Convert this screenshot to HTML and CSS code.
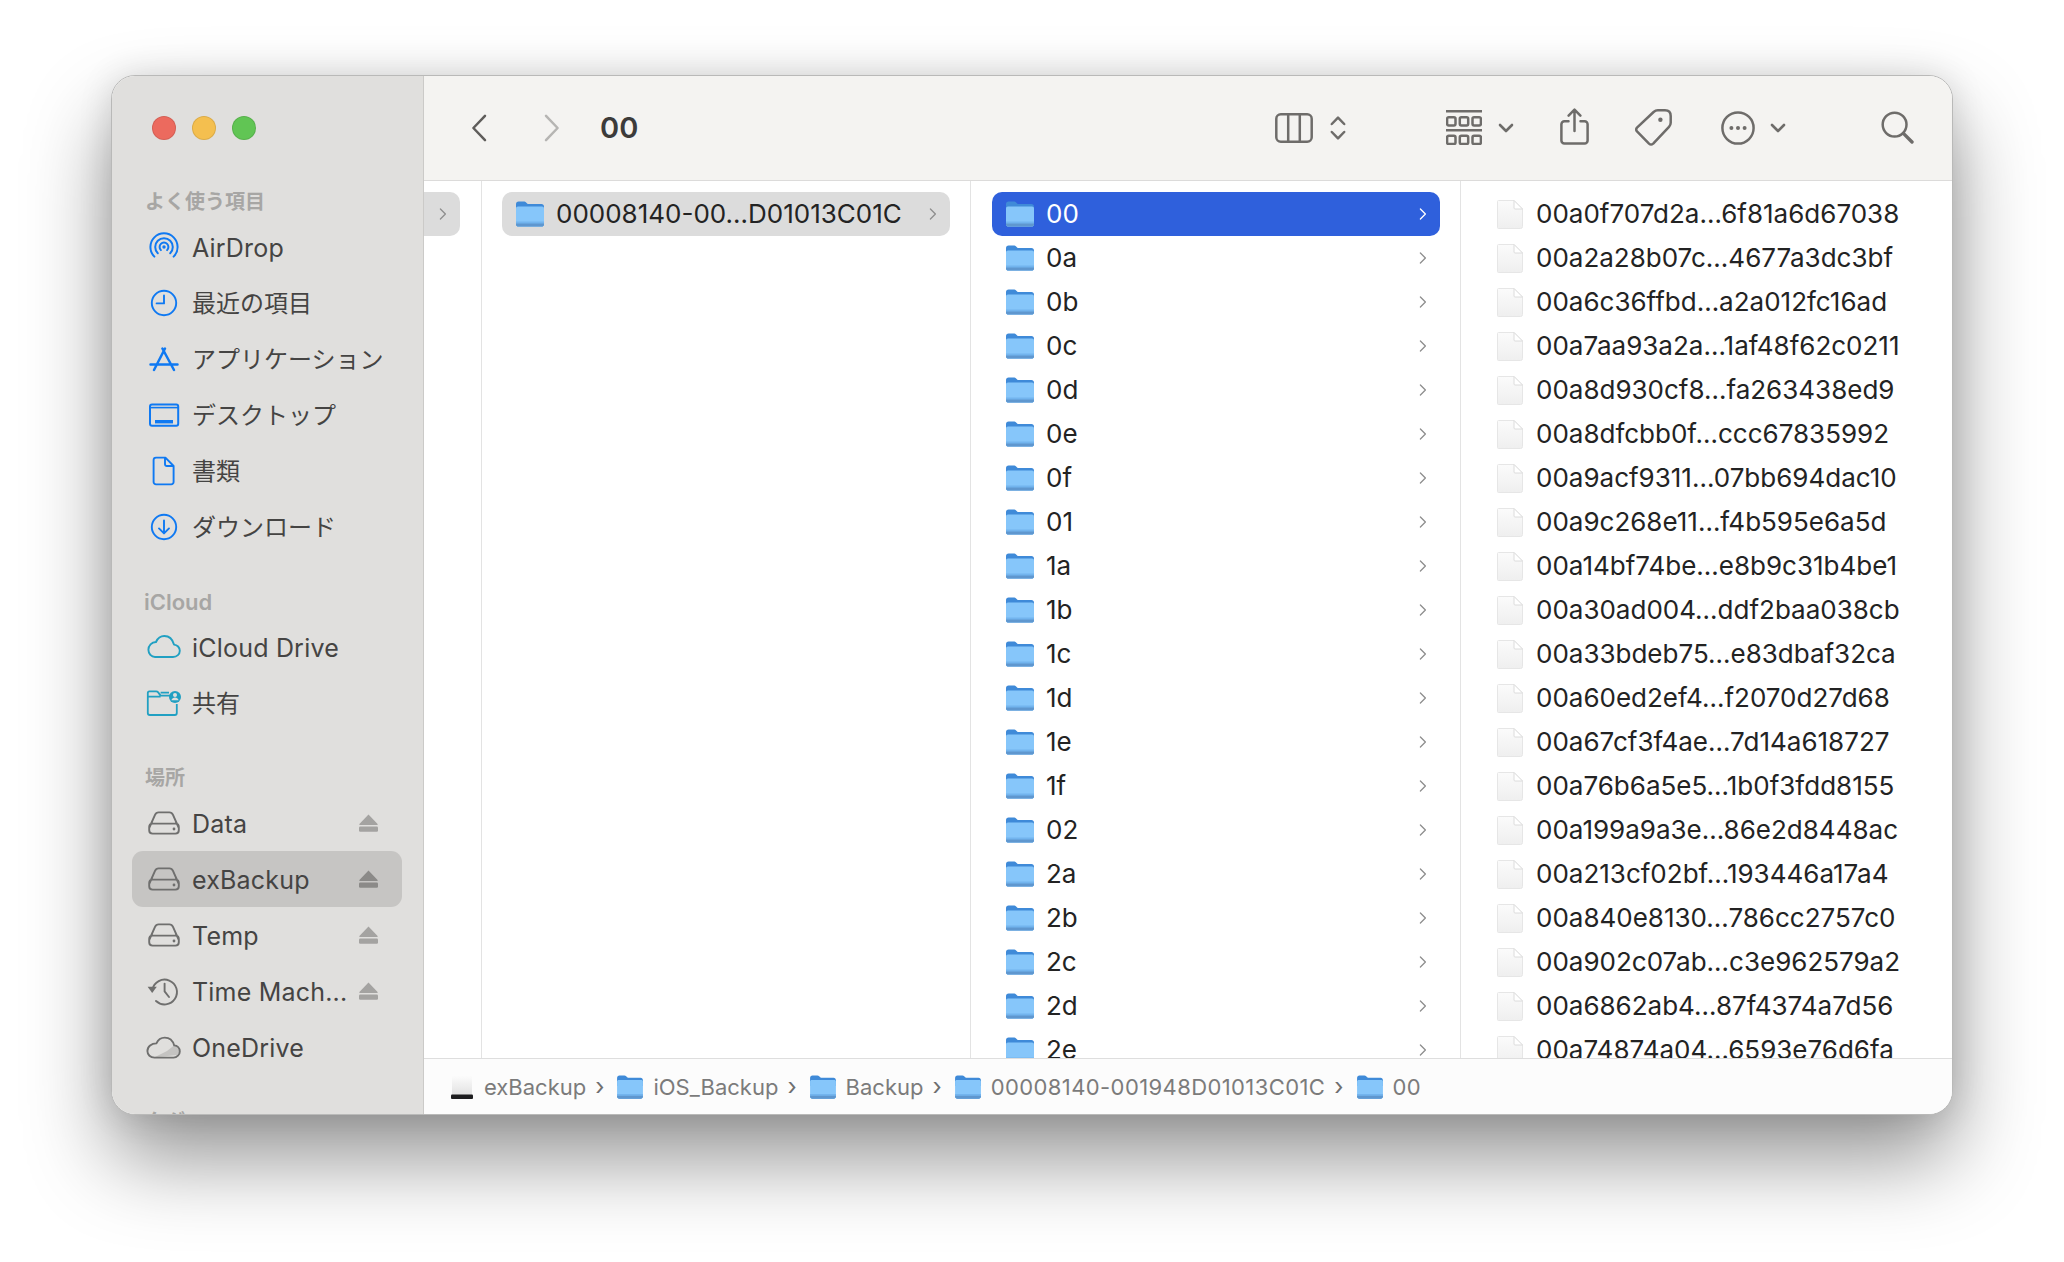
FILE: index.html
```html
<!DOCTYPE html>
<html lang="ja">
<head>
<meta charset="utf-8">
<title>00</title>
<link rel="stylesheet" href="styles.css">
</head>
<body>
<svg class="defs" aria-hidden="true">
  <defs>
    <linearGradient id="fileGrad" x1="0" y1="0" x2="0" y2="1"><stop offset="0" stop-color="#fbfbfb"/><stop offset="1" stop-color="#efefef"/></linearGradient>
    <linearGradient id="diskGrad" x1="0" y1="0" x2="0" y2="1"><stop offset="0" stop-color="#fdfdfd"/><stop offset="1" stop-color="#dcdcdc"/></linearGradient>
    <symbol id="folder" viewBox="0 0 28 26">
      <path d="M0 3.4C0 1.6 1 .6 2.6.6h5.2c1 0 1.6.3 2.3 1l1.6 1.5h13.7c1.6 0 2.6 1 2.6 2.6V12H0z" fill="#3f8ad8"/>
      <path d="M0 7.4c0-1.3.7-2 2-2h24c1.3 0 2 .7 2 2V23c0 1.6-1 2.6-2.6 2.6H2.6C1 25.6 0 24.6 0 23z" fill="#86c6fa"/>
      <path d="M0 20.6h28V23c0 1.6-1 2.6-2.6 2.6H2.6C1 25.6 0 24.6 0 23z" fill="#72b4ee"/>
      <path d="M0 22.6h28v.8c0 1.4-1 2.2-2.6 2.2H2.6C1 25.6 0 24.8 0 23.4z" fill="#5f97cf"/>
    </symbol>
    <symbol id="file" viewBox="0 0 26 29">
      <path d="M1.5.5H17L25.5 9v17.5a2 2 0 0 1-2 2h-22a1 1 0 0 1-1-1V1.5a1 1 0 0 1 1-1z" fill="url(#fileGrad)" stroke="#e6e6e6"/>
      <path d="M17 .5V8a1 1 0 0 0 1 1h7.5z" fill="#fff" stroke="#dcdcdc"/>
    </symbol>
    <symbol id="chevron" viewBox="0 0 8 12"><path d="M1.4 1l5 5-5 5" fill="none" stroke="currentColor" stroke-width="1.3" stroke-linecap="round" stroke-linejoin="round"/></symbol>
    <symbol id="eject" viewBox="0 0 19 18"><path d="M9.5.4L18.6 10a.6.6 0 0 1-.4 1H.8a.6.6 0 0 1-.4-1z" fill="currentColor"/><rect x="0" y="12.6" width="19" height="5.2" rx="1.2" fill="currentColor"/></symbol>
    <symbol id="menu-chev" viewBox="0 0 16 10"><path d="M2 2l6 6 6-6" fill="none" stroke="currentColor" stroke-width="2.6" stroke-linecap="round" stroke-linejoin="round"/></symbol>
    <symbol id="hdd" viewBox="0 0 40 32"><path d="M5.4 20.5L11 7.8C11.8 6 12.8 5.4 14.6 5.4h10.8c1.8 0 2.8.6 3.6 2.4l5.6 12.7M8.6 16.6h22.8c2.3 0 3.4 1.3 3.4 3.4v3.2c0 2.2-1.2 3.4-3.4 3.4H8.6c-2.2 0-3.4-1.2-3.4-3.4V20c0-2.1 1.1-3.4 3.4-3.4z" fill="none" stroke="currentColor" stroke-width="1.9" stroke-linejoin="round"/><circle cx="30" cy="22" r="1.4" fill="currentColor"/></symbol>
  </defs>
</svg>

<div class="window">
  <aside class="sidebar">
    <div class="lights"><span class="light red"></span><span class="light yellow"></span><span class="light green"></span></div>

    <section class="side-first">
      <h2 class="side-head">よく使う項目</h2>
      <div class="side-row"><svg class="side-icon blue" viewBox="0 0 40 32"><g fill="none" stroke="currentColor" stroke-width="2" stroke-linecap="round"><path d="M10.4 25.6A13.6 13.6 0 1 1 29.6 25.6"/><path d="M13.8 22.2A8.8 8.8 0 1 1 26.2 22.2"/><path d="M16.9 19.1A4.4 4.4 0 1 1 23.1 19.1"/></g><circle cx="20" cy="16" r="1.7" fill="currentColor"/></svg><span class="side-label">AirDrop</span></div>
      <div class="side-row"><svg class="side-icon blue" viewBox="0 0 40 32"><circle cx="20" cy="16" r="12.2" fill="none" stroke="currentColor" stroke-width="1.9"/><path d="M20 8.5V16.4H12.6" fill="none" stroke="currentColor" stroke-width="1.9" stroke-linecap="round" stroke-linejoin="round"/></svg><span class="side-label jp">最近の項目</span></div>
      <div class="side-row"><svg class="side-icon blue" viewBox="0 0 40 32"><path d="M10 27L21 5.5M30 27L18.4 5.5M6.5 21.4H33.5" fill="none" stroke="currentColor" stroke-width="2.5" stroke-linecap="round"/></svg><span class="side-label jp">アプリケーション</span></div>
      <div class="side-row"><svg class="side-icon blue" viewBox="0 0 40 32"><rect x="6" y="5.4" width="28.2" height="21.4" rx="2" fill="none" stroke="currentColor" stroke-width="2"/><path d="M6 8.6H34" stroke="currentColor" stroke-width="1.6"/><rect x="11" y="21" width="18" height="3.4" fill="currentColor"/></svg><span class="side-label jp">デスクトップ</span></div>
      <div class="side-row"><svg class="side-icon blue" viewBox="0 0 40 32"><path d="M12 2.6h9.4L29.6 11v16a2.4 2.4 0 0 1-2.4 2.4H12A2.4 2.4 0 0 1 9.6 27V5A2.4 2.4 0 0 1 12 2.6zM21 2.8V9.2a1.8 1.8 0 0 0 1.8 1.8h6.6" fill="none" stroke="currentColor" stroke-width="1.9" stroke-linejoin="round"/></svg><span class="side-label jp">書類</span></div>
      <div class="side-row"><svg class="side-icon blue" viewBox="0 0 40 32"><circle cx="20" cy="16" r="12.2" fill="none" stroke="currentColor" stroke-width="1.9"/><path d="M20 9.5V22M15 17.4l5 5 5-5" fill="none" stroke="currentColor" stroke-width="1.9" stroke-linecap="round" stroke-linejoin="round"/></svg><span class="side-label jp">ダウンロード</span></div>
    </section>

    <section class="side-group">
      <h2 class="side-head side-head-latin">iCloud</h2>
      <div class="side-row"><svg class="side-icon teal" viewBox="0 0 40 32"><path d="M11 26H29C33 26 35.8 23.2 35.8 19.8C35.8 16.4 33.2 13.8 30 13.6C28.6 8.4 24.8 5 20.3 5C16.5 5 13.6 7.4 12 11C7.6 11 4.4 14.6 4.4 18.8C4.4 22.8 7.4 26 11 26Z" fill="none" stroke="currentColor" stroke-width="1.9" stroke-linejoin="round"/></svg><span class="side-label">iCloud Drive</span></div>
      <div class="side-row"><svg class="side-icon teal" viewBox="0 0 40 32"><path d="M3.8 9.8V26a2 2 0 0 0 2 2H30.8a2 2 0 0 0 2-2V17M3.8 10V6a1.6 1.6 0 0 1 1.6-1.6h6.8c1 0 1.5.4 2 1l2.4 3.2H26M3.8 9.6H16.6M16.6 5.6H25" fill="none" stroke="currentColor" stroke-width="1.8" stroke-linejoin="round"/><circle cx="31" cy="10" r="6" fill="currentColor"/><circle cx="31" cy="8" r="2" fill="#e0dfdd"/><path d="M27.4 13.2c.6-2 2-2.8 3.6-2.8s3 .8 3.6 2.8z" fill="#e0dfdd"/></svg><span class="side-label jp">共有</span></div>
    </section>

    <section class="side-group">
      <h2 class="side-head">場所</h2>
      <div class="side-row"><svg class="side-icon gray"><use href="#hdd"/></svg><span class="side-label">Data</span><svg class="eject"><use href="#eject"/></svg></div>
      <div class="side-row is-selected"><svg class="side-icon gray"><use href="#hdd"/></svg><span class="side-label">exBackup</span><svg class="eject"><use href="#eject"/></svg></div>
      <div class="side-row"><svg class="side-icon gray"><use href="#hdd"/></svg><span class="side-label">Temp</span><svg class="eject"><use href="#eject"/></svg></div>
      <div class="side-row"><svg class="side-icon gray" viewBox="0 0 40 32"><path d="M8.4 14.5A12.4 12.4 0 1 1 12 26" fill="none" stroke="currentColor" stroke-width="1.9" stroke-linecap="round"/><path d="M3.6 11.8h9.2L8.2 18z" fill="currentColor"/><path d="M20.6 8.6V16.4L25 22" fill="none" stroke="currentColor" stroke-width="1.9" stroke-linecap="round" stroke-linejoin="round"/></svg><span class="side-label">Time Mach...</span><svg class="eject"><use href="#eject"/></svg></div>
      <div class="side-row"><svg class="side-icon gray" viewBox="0 0 40 32"><path d="M10 26.6L33 24C35 22 35.6 21 35.6 19.6C35.6 16.6 33 14.4 30 14.4L23 20z" fill="#c4c3c1"/><path d="M10.5 26.6H29.5C33 26.6 35.8 23.6 35.8 20.4C35.8 17 33.2 14.6 30.2 14.4C28.8 9.6 25 6.6 20.8 6.6C17 6.6 14 8.8 12.4 12.4C7.6 12.4 3.4 15.2 3.4 20C3.4 23.8 6.4 26.6 10.5 26.6Z" fill="none" stroke="currentColor" stroke-width="1.9" stroke-linejoin="round"/></svg><span class="side-label">OneDrive</span></div>
    </section>

    <section class="side-group">
      <h2 class="side-head">タグ</h2>
    </section>
  </aside>

  <main class="main">
    <header class="toolbar">
      <svg class="tb back" viewBox="0 0 16 28"><path d="M14 1.8L2.4 14 14 26.2"/></svg>
      <svg class="tb forward" viewBox="0 0 16 28"><path d="M2 1.8L13.6 14 2 26.2"/></svg>
      <h1 class="title">00</h1>
      <div class="tools">
        <svg class="tb t-cols" viewBox="0 0 38 30"><rect x="1.3" y="1.3" width="35.4" height="27.4" rx="4.5"/><path d="M13.2 1.3V28.7M24.8 1.3V28.7"/></svg>
        <svg class="tb t-updown" viewBox="0 0 16 26"><path d="M1.8 9L8 2.6 14.2 9M1.8 17L8 23.4 14.2 17"/></svg>
        <svg class="tb t-group" viewBox="0 0 36 35"><path d="M0 1.2H36M0 20.2H36"/><rect x="1.1" y="7.2" width="8.4" height="8.2" rx="1.6"/><rect x="13.8" y="7.2" width="8.4" height="8.2" rx="1.6"/><rect x="26.5" y="7.2" width="8.4" height="8.2" rx="1.6"/><rect x="1.1" y="25.8" width="8.4" height="8.2" rx="1.6"/><rect x="13.8" y="25.8" width="8.4" height="8.2" rx="1.6"/><rect x="26.5" y="25.8" width="8.4" height="8.2" rx="1.6"/></svg>
        <svg class="tb-chev t-chev1"><use href="#menu-chev"/></svg>
        <svg class="tb t-share" viewBox="0 0 29 37"><path d="M8.5 13.2H4.4A3 3 0 0 0 1.4 16.2V32.6a3 3 0 0 0 3 3H24.6a3 3 0 0 0 3-3V16.2a3 3 0 0 0-3-3H20.5M14.5 23V2M8.6 7.6L14.5 1.6 20.4 7.6"/></svg>
        <svg class="tb t-tag" viewBox="0 0 37 37"><path d="M2 18.6L18.6 3Q20.6 1.3 22.8 1.3H30Q35.7 1.3 35.7 7V13.8Q35.7 16 34 17.8L18.2 34.6Q16 36.4 14 34.6L2 22.4Q.4 20.4 2 18.6Z"/><circle class="dot" cx="25.4" cy="10.8" r="2.2"/></svg>
        <svg class="tb t-more" viewBox="0 0 34 34"><circle cx="17" cy="17" r="15.6"/><circle class="dot" cx="10.4" cy="17" r="2"/><circle class="dot" cx="17" cy="17" r="2"/><circle class="dot" cx="23.6" cy="17" r="2"/></svg>
        <svg class="tb-chev t-chev2"><use href="#menu-chev"/></svg>
        <svg class="tb t-search" viewBox="0 0 33 33"><circle cx="13.6" cy="13.6" r="11.9"/><path class="thick" d="M22.4 22.4L31 31"/></svg>
      </div>
    </header>

    <div class="browser">
      <div class="col col-a">
        <div class="row row-stub is-parent"><svg class="chev"><use href="#chevron"/></svg></div>
      </div>
      <div class="col col-b">
        <div class="row is-parent"><svg class="folder"><use href="#folder"/></svg><span class="name">00008140-00…D01013C01C</span><svg class="chev"><use href="#chevron"/></svg></div>
      </div>
      <div class="col col-c">
        <div class="row is-active"><svg class="folder"><use href="#folder"/></svg><span class="name">00</span><svg class="chev"><use href="#chevron"/></svg></div>
        <div class="row"><svg class="folder"><use href="#folder"/></svg><span class="name">0a</span><svg class="chev"><use href="#chevron"/></svg></div>
        <div class="row"><svg class="folder"><use href="#folder"/></svg><span class="name">0b</span><svg class="chev"><use href="#chevron"/></svg></div>
        <div class="row"><svg class="folder"><use href="#folder"/></svg><span class="name">0c</span><svg class="chev"><use href="#chevron"/></svg></div>
        <div class="row"><svg class="folder"><use href="#folder"/></svg><span class="name">0d</span><svg class="chev"><use href="#chevron"/></svg></div>
        <div class="row"><svg class="folder"><use href="#folder"/></svg><span class="name">0e</span><svg class="chev"><use href="#chevron"/></svg></div>
        <div class="row"><svg class="folder"><use href="#folder"/></svg><span class="name">0f</span><svg class="chev"><use href="#chevron"/></svg></div>
        <div class="row"><svg class="folder"><use href="#folder"/></svg><span class="name">01</span><svg class="chev"><use href="#chevron"/></svg></div>
        <div class="row"><svg class="folder"><use href="#folder"/></svg><span class="name">1a</span><svg class="chev"><use href="#chevron"/></svg></div>
        <div class="row"><svg class="folder"><use href="#folder"/></svg><span class="name">1b</span><svg class="chev"><use href="#chevron"/></svg></div>
        <div class="row"><svg class="folder"><use href="#folder"/></svg><span class="name">1c</span><svg class="chev"><use href="#chevron"/></svg></div>
        <div class="row"><svg class="folder"><use href="#folder"/></svg><span class="name">1d</span><svg class="chev"><use href="#chevron"/></svg></div>
        <div class="row"><svg class="folder"><use href="#folder"/></svg><span class="name">1e</span><svg class="chev"><use href="#chevron"/></svg></div>
        <div class="row"><svg class="folder"><use href="#folder"/></svg><span class="name">1f</span><svg class="chev"><use href="#chevron"/></svg></div>
        <div class="row"><svg class="folder"><use href="#folder"/></svg><span class="name">02</span><svg class="chev"><use href="#chevron"/></svg></div>
        <div class="row"><svg class="folder"><use href="#folder"/></svg><span class="name">2a</span><svg class="chev"><use href="#chevron"/></svg></div>
        <div class="row"><svg class="folder"><use href="#folder"/></svg><span class="name">2b</span><svg class="chev"><use href="#chevron"/></svg></div>
        <div class="row"><svg class="folder"><use href="#folder"/></svg><span class="name">2c</span><svg class="chev"><use href="#chevron"/></svg></div>
        <div class="row"><svg class="folder"><use href="#folder"/></svg><span class="name">2d</span><svg class="chev"><use href="#chevron"/></svg></div>
        <div class="row"><svg class="folder"><use href="#folder"/></svg><span class="name">2e</span><svg class="chev"><use href="#chevron"/></svg></div>
      </div>
      <div class="col col-d">
        <div class="row"><svg class="file"><use href="#file"/></svg><span class="name">00a0f707d2a…6f81a6d67038</span></div>
        <div class="row"><svg class="file"><use href="#file"/></svg><span class="name">00a2a28b07c…4677a3dc3bf</span></div>
        <div class="row"><svg class="file"><use href="#file"/></svg><span class="name">00a6c36ffbd…a2a012fc16ad</span></div>
        <div class="row"><svg class="file"><use href="#file"/></svg><span class="name">00a7aa93a2a…1af48f62c0211</span></div>
        <div class="row"><svg class="file"><use href="#file"/></svg><span class="name">00a8d930cf8…fa263438ed9</span></div>
        <div class="row"><svg class="file"><use href="#file"/></svg><span class="name">00a8dfcbb0f…ccc67835992</span></div>
        <div class="row"><svg class="file"><use href="#file"/></svg><span class="name">00a9acf9311…07bb694dac10</span></div>
        <div class="row"><svg class="file"><use href="#file"/></svg><span class="name">00a9c268e11…f4b595e6a5d</span></div>
        <div class="row"><svg class="file"><use href="#file"/></svg><span class="name">00a14bf74be…e8b9c31b4be1</span></div>
        <div class="row"><svg class="file"><use href="#file"/></svg><span class="name">00a30ad004…ddf2baa038cb</span></div>
        <div class="row"><svg class="file"><use href="#file"/></svg><span class="name">00a33bdeb75…e83dbaf32ca</span></div>
        <div class="row"><svg class="file"><use href="#file"/></svg><span class="name">00a60ed2ef4…f2070d27d68</span></div>
        <div class="row"><svg class="file"><use href="#file"/></svg><span class="name">00a67cf3f4ae…7d14a618727</span></div>
        <div class="row"><svg class="file"><use href="#file"/></svg><span class="name">00a76b6a5e5…1b0f3fdd8155</span></div>
        <div class="row"><svg class="file"><use href="#file"/></svg><span class="name">00a199a9a3e…86e2d8448ac</span></div>
        <div class="row"><svg class="file"><use href="#file"/></svg><span class="name">00a213cf02bf…193446a17a4</span></div>
        <div class="row"><svg class="file"><use href="#file"/></svg><span class="name">00a840e8130…786cc2757c0</span></div>
        <div class="row"><svg class="file"><use href="#file"/></svg><span class="name">00a902c07ab…c3e962579a2</span></div>
        <div class="row"><svg class="file"><use href="#file"/></svg><span class="name">00a6862ab4…87f4374a7d56</span></div>
        <div class="row"><svg class="file"><use href="#file"/></svg><span class="name">00a74874a04…6593e76d6fa</span></div>
      </div>
    </div>

    <footer class="pathbar">
      <svg class="disk" viewBox="0 0 22 24"><rect x="1" y="0" width="20" height="24" rx="1.5" fill="url(#diskGrad)"/><rect x="0" y="19.5" width="22" height="4.5" rx="1" fill="#1d1d1f"/></svg>
      <span class="crumb">exBackup</span><span class="sep">›</span>
      <svg class="crumb-folder"><use href="#folder"/></svg><span class="crumb">iOS_Backup</span><span class="sep">›</span>
      <svg class="crumb-folder"><use href="#folder"/></svg><span class="crumb">Backup</span><span class="sep">›</span>
      <svg class="crumb-folder"><use href="#folder"/></svg><span class="crumb crumb-id">00008140-001948D01013C01C</span><span class="sep">›</span>
      <svg class="crumb-folder"><use href="#folder"/></svg><span class="crumb crumb-id">00</span>
    </footer>
  </main>
</div>
</body>
</html>
```

FILE: styles.css
```css
* { box-sizing: border-box; }

html, body { margin: 0; height: 100%; }

body {
  background: #fff;
  padding: 75px 111px 147px 111px;
  font-family: Inter, "Noto Sans CJK JP", "Liberation Sans", sans-serif;
  color: #232323;
  overflow: hidden;
}

.defs { display: block; width: 0; height: 0; }

.window {
  display: flex;
  width: 1842px;
  height: 1040px;
  border: 1px solid #b9b9b8;
  border-radius: 24px;
  overflow: hidden;
  background: #fff;
  box-shadow: 0 44px 84px rgba(0, 0, 0, .42), 0 0 34px rgba(0, 0, 0, .12);
}

/* Sidebar */
.sidebar {
  flex: 0 0 312px;
  background: #e0dfdd;
  border-right: 1px solid #cbcac8;
  padding: 40px 21px 0 20px;
  overflow: hidden;
}

.lights { display: flex; gap: 16px; padding-left: 20px; height: 24px; }
.light { width: 24px; height: 24px; border-radius: 50%; border: 1px solid rgba(0, 0, 0, .1); }
.red { background: #ec6a5e; }
.yellow { background: #f4bf4f; }
.green { background: #61c554; }

.side-first { margin-top: 45px; }
.side-group { margin-top: 30px; }

.side-head {
  margin: 0;
  height: 34px;
  padding-left: 13px;
  font-size: 20px;
  font-weight: 600;
  line-height: 34px;
  color: #a7a6a4;
}
.side-head-latin { font-size: 22px; padding-left: 12px; }

.side-row {
  display: flex;
  align-items: center;
  height: 56px;
  padding: 0 24px 0 12px;
  border-radius: 11px;
}
.side-row.is-selected { background: #c6c5c3; }

.side-icon { flex: 0 0 40px; width: 40px; height: 32px; }
.side-icon use { width: 40px; height: 32px; }
.blue { color: #0f79f2; }
.teal { color: #21a0c2; }
.gray { color: #6f6f6e; }

.side-label {
  margin: 2px 0 0 8px;
  font-size: 25px;
  letter-spacing: .2px;
  line-height: 32px;
  color: #454443;
  white-space: nowrap;
}
.side-label.jp { font-size: 24px; letter-spacing: 0; }

.eject { flex: 0 0 19px; width: 19px; height: 18px; margin-left: auto; color: #a4a3a1; }
.is-selected .eject { color: #8b8a88; }

/* Main */
.main { flex: 1; min-width: 0; display: flex; flex-direction: column; }

.toolbar {
  flex: 0 0 105px;
  display: flex;
  align-items: center;
  padding: 0 38px 1px 47px;
  background: #f4f3f1;
  border-bottom: 1px solid #dcdbda;
}

.tb { fill: none; stroke: #6e6c6a; stroke-width: 2.5; stroke-linecap: round; stroke-linejoin: round; flex: none; }
.tb .dot { fill: #6e6c6a; stroke: none; }
.tb .thick { stroke-width: 3.4; }
.tb-chev { flex: none; width: 16px; height: 10px; color: #6e6c6a; }

.back { width: 16px; height: 28px; stroke: #5f5d5b; }
.forward { width: 16px; height: 28px; margin-left: 57px; stroke: #b6b5b3; }

.title {
  margin: 0 0 0 40px;
  font-size: 29px;
  font-weight: 600;
  line-height: 40px;
  color: #3c3b3a;
}

.tools { margin-left: auto; display: flex; align-items: center; }
.t-cols { width: 38px; height: 30px; }
.t-updown { width: 16px; height: 26px; margin-left: 17px; }
.t-group { width: 36px; height: 35px; margin-left: 100px; }
.t-chev1 { margin-left: 16px; }
.t-share { width: 29px; height: 37px; margin-left: 46px; margin-top: -2px; }
.t-tag { width: 37px; height: 37px; margin-left: 46px; }
.t-more { width: 34px; height: 34px; margin-left: 49px; }
.t-chev2 { margin-left: 15px; }
.t-search { width: 33px; height: 33px; margin-left: 95px; }

/* Columns */
.browser { flex: 1; min-height: 0; display: flex; overflow: hidden; }

.col { padding-top: 11px; border-right: 1px solid #e3e3e3; }
.col-a { flex: 0 0 58px; }
.col-b { flex: 0 0 489px; padding-left: 20px; padding-right: 20px; }
.col-c { flex: 0 0 490px; padding-left: 21px; padding-right: 20px; }
.col-d { flex: 1; min-width: 0; border-right: 0; padding-left: 36px; }

.row {
  display: flex;
  align-items: center;
  height: 44px;
  padding: 0 13px 0 14px;
  border-radius: 10px;
  color: #232323;
  white-space: nowrap;
}
.row.is-parent { background: #dcdcdc; }
.row.is-active { background: #2f60dc; color: #fff; }
.row-stub { width: 36px; border-radius: 0 10px 10px 0; }

.col-d .row { padding: 0; }

.folder { flex: 0 0 28px; width: 28px; height: 26px; margin-right: 12px; }
.file { flex: 0 0 26px; width: 26px; height: 29px; margin-right: 13px; }

.name { font-size: 26px; line-height: 32px; margin-bottom: 1px; }

.chev { flex: 0 0 8px; width: 8px; height: 12px; margin-left: auto; color: #8e8e8e; }
.row-stub .chev { margin-left: 1px; }
.is-active .chev { color: #fff; }

/* Path bar */
.pathbar {
  flex: 0 0 56px;
  display: flex;
  align-items: center;
  padding: 0 0 0 27px;
  background: #fcfcfc;
  border-top: 1px solid #dedede;
  font-size: 22px;
  color: #7b7b7b;
}

.disk { flex: 0 0 22px; width: 22px; height: 24px; margin-right: 11px; }
.crumb-folder { flex: 0 0 26px; width: 26px; height: 24px; margin-right: 10px; }
.crumb { line-height: 30px; white-space: nowrap; }
.crumb-id { letter-spacing: .4px; }
.sep { margin: 0 13px 0 9px; font-size: 24px; line-height: 30px; color: #6f6f6f; }
```
